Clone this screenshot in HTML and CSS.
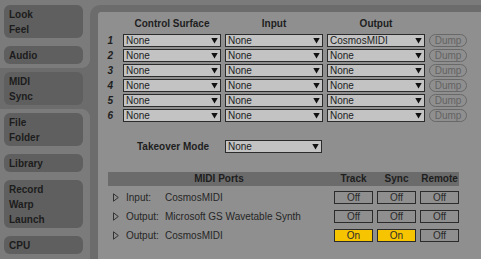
FILE: index.html
```html
<!DOCTYPE html>
<html lang="en">
<head>
    <meta charset="UTF-8">
    <title>Preferences - MIDI Sync</title>
    <link rel="stylesheet" href="styles.css">
</head>
<body>
    <div class="app">
        <div class="sidebar">
            <div class="tab">Look<br>Feel</div>
            <div class="tab">Audio</div>
            <div class="sel">
                <div class="tab">MIDI<br>Sync</div>
            </div>
            <div class="tab">File<br>Folder</div>
            <div class="tab">Library</div>
            <div class="tab">Record<br>Warp<br>Launch</div>
            <div class="tab">CPU</div>
        </div>

        <div class="panel">
            <div class="inner">
                <!-- control surface setup -->
                <div class="routing">
                    <div class="col-head"></div>
                    <div class="col-head">Control Surface</div>
                    <div class="col-head">Input</div>
                    <div class="col-head">Output</div>
                    <div class="col-head"></div>

                    <div class="num">1</div>
                    <div class="select">None</div>
                    <div class="select">None</div>
                    <div class="select">CosmosMIDI</div>
                    <div class="dump">Dump</div>

                    <div class="num">2</div>
                    <div class="select">None</div>
                    <div class="select">None</div>
                    <div class="select">None</div>
                    <div class="dump">Dump</div>

                    <div class="num">3</div>
                    <div class="select">None</div>
                    <div class="select">None</div>
                    <div class="select">None</div>
                    <div class="dump">Dump</div>

                    <div class="num">4</div>
                    <div class="select">None</div>
                    <div class="select">None</div>
                    <div class="select">None</div>
                    <div class="dump">Dump</div>

                    <div class="num">5</div>
                    <div class="select">None</div>
                    <div class="select">None</div>
                    <div class="select">None</div>
                    <div class="dump">Dump</div>

                    <div class="num">6</div>
                    <div class="select">None</div>
                    <div class="select">None</div>
                    <div class="select">None</div>
                    <div class="dump">Dump</div>
                </div>

                <div class="takeover">
                    <div class="takeover-label">Takeover Mode</div>
                    <div class="select">None</div>
                </div>

                <!-- midi ports -->
                <div class="ports">
                    <div class="ports-head">
                        <div>MIDI Ports</div>
                        <div>Track</div>
                        <div>Sync</div>
                        <div>Remote</div>
                    </div>
                    <div class="port-row">
                        <div class="port-name">
                            <svg class="expand" width="6" height="9" viewBox="0 0 6 9"><path d="M0.5 0.8 L5.3 4.5 L0.5 8.2 Z" fill="none" stroke="#333" stroke-width="1"/></svg>
                            <span class="port-kind">Input:</span>CosmosMIDI
                        </div>
                        <div class="toggle">Off</div>
                        <div class="toggle">Off</div>
                        <div class="toggle">Off</div>
                    </div>
                    <div class="port-row">
                        <div class="port-name">
                            <svg class="expand" width="6" height="9" viewBox="0 0 6 9"><path d="M0.5 0.8 L5.3 4.5 L0.5 8.2 Z" fill="none" stroke="#333" stroke-width="1"/></svg>
                            <span class="port-kind">Output:</span>Microsoft GS Wavetable Synth
                        </div>
                        <div class="toggle">Off</div>
                        <div class="toggle">Off</div>
                        <div class="toggle">Off</div>
                    </div>
                    <div class="port-row">
                        <div class="port-name">
                            <svg class="expand" width="6" height="9" viewBox="0 0 6 9"><path d="M0.5 0.8 L5.3 4.5 L0.5 8.2 Z" fill="none" stroke="#333" stroke-width="1"/></svg>
                            <span class="port-kind">Output:</span>CosmosMIDI
                        </div>
                        <div class="toggle on">On</div>
                        <div class="toggle on">On</div>
                        <div class="toggle">Off</div>
                    </div>
                </div>
            </div>
        </div>
    </div>
</body>
</html>
```

FILE: styles.css
```css
body {
    margin: 0;
    background: #7b7b7b;
    font-family: "Liberation Sans", Arial, sans-serif;
    font-size: 10px;
    color: #222;
    overflow: hidden;
}
.app {
    display: flex;
    height: 259px;
}
.sidebar {
    width: 90px;
    flex-shrink: 0;
    display: flex;
    flex-direction: column;
    gap: 8px;
    padding-top: 5px;
}
.tab {
    margin-left: 4px;
    width: 69px;
    padding: 2px 5px 1px;
    line-height: 15px;
    background: #5f5f5f;
    border-radius: 6px;
    font-weight: bold;
    color: #1c1c1c;
}
.sel {
    position: relative;
    margin: -4px 0;
    padding: 4px 0;
    background: #6c6c6c;
}
.sel::before,
.sel::after {
    content: "";
    position: absolute;
    right: 0;
    width: 8px;
    height: 8px;
}
.sel::before {
    top: -8px;
    background: radial-gradient(circle at 0 0, transparent 7.5px, #6c6c6c 8px);
}
.sel::after {
    bottom: -8px;
    background: radial-gradient(circle at 0 100%, transparent 7.5px, #6c6c6c 8px);
}
.panel {
    flex: 1;
    display: flex;
    margin-top: 5px;
    padding: 7px 0 0 8px;
    background: #6c6c6c;
    border-top-left-radius: 10px;
}
.inner {
    flex: 1;
    background: #8f8f8f;
    border-top-left-radius: 3px;
    padding-top: 6px;
}
.routing {
    display: grid;
    grid-template-columns: 21px 98px 98px 98px 38px;
    column-gap: 4px;
    row-gap: 2px;
}
.col-head {
    height: 14px;
    line-height: 12px;
    text-align: center;
    font-weight: bold;
    color: #1e1e1e;
}
.num {
    height: 13px;
    line-height: 13px;
    text-align: right;
    padding-right: 6px;
    font-weight: bold;
    font-style: italic;
    color: #1e1e1e;
}
.select {
    height: 11px;
    line-height: 11px;
    border: 1px solid #2b2b2b;
    background: #c3c3c3;
    padding-left: 2px;
    color: #222;
    display: flex;
    align-items: center;
    justify-content: space-between;
}
.select::after {
    content: "";
    width: 7px;
    height: 6px;
    margin-right: 2px;
    background: #111;
    clip-path: polygon(0 0, 100% 0, 50% 100%);
}
.dump {
    height: 11px;
    line-height: 11px;
    border: 1px solid #686868;
    border-radius: 7px;
    text-align: center;
    color: #636363;
}
.takeover {
    display: flex;
    align-items: center;
    margin: 18px 0 0 39px;
}
.takeover-label {
    width: 88px;
    font-weight: bold;
    color: #1e1e1e;
}
.takeover .select {
    width: 93px;
}
.ports {
    width: 351px;
    margin: 19px 0 0 10px;
}
.ports-head,
.port-row {
    display: grid;
    grid-template-columns: 1fr 39px 39px 39px;
    column-gap: 4px;
}
.ports-head {
    height: 14px;
    line-height: 14px;
    background: #6b6b6b;
    text-align: center;
    font-weight: bold;
    color: #1e1e1e;
}
.port-row {
    height: 13px;
    margin-top: 5px;
}
.port-row + .port-row {
    margin-top: 6px;
}
.port-name {
    display: flex;
    align-items: center;
    padding-left: 5px;
    color: #262626;
}
.expand {
    margin-right: 7px;
}
.port-kind {
    width: 39px;
}
.toggle {
    height: 11px;
    line-height: 11px;
    border: 1px solid #2b2b2b;
    text-align: center;
    color: #2a2a2a;
}
.toggle.on {
    background: #f6c400;
}
```
